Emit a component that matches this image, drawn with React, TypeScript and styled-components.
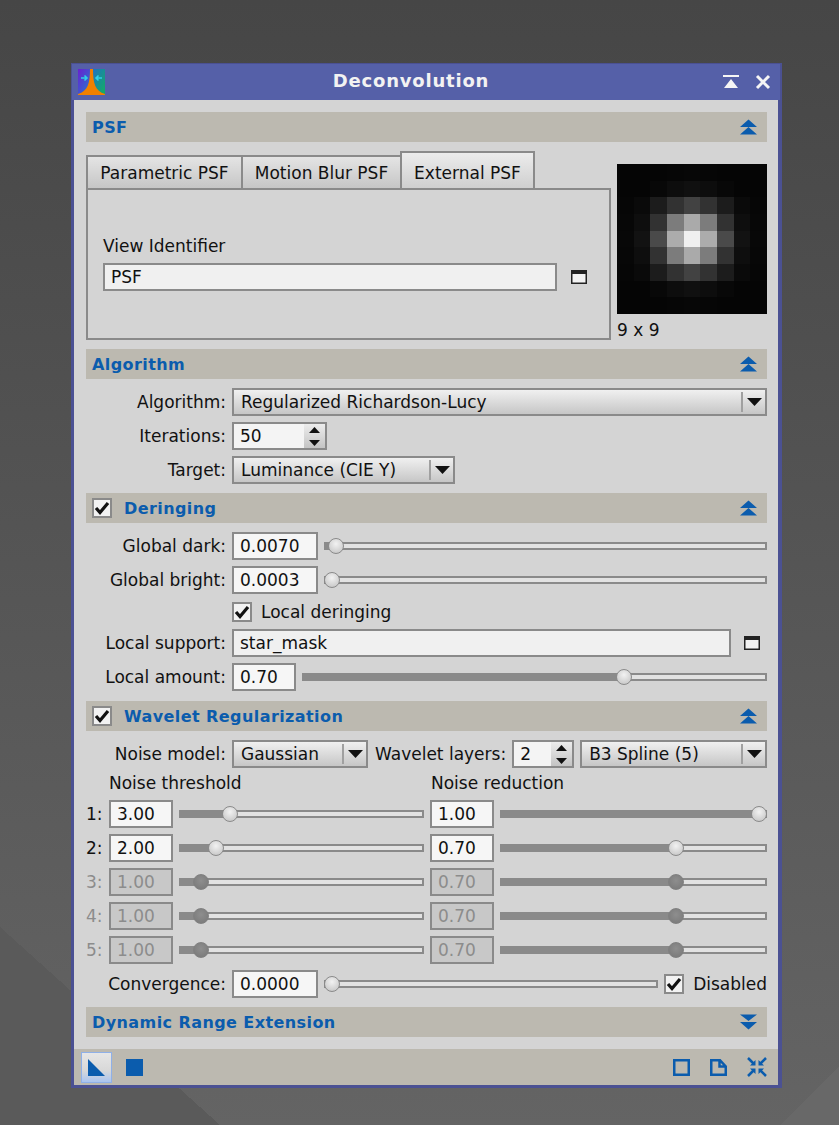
import React from "react";
import styled, { createGlobalStyle } from "styled-components";

const GlobalStyle = createGlobalStyle`
  html, body {
    margin: 0;
    padding: 0;
    height: 100%;
  }
  body {
    font-family: "DejaVu Sans", sans-serif;
    font-size: 17px;
    color: #111;
    background: #4a4a4a;
  }
`;

const BLUE = "#0b5cad";
const BORDER = "#8a8a8a";

const Desktop = styled.div`
  box-sizing: border-box;
  width: 839px;
  height: 1125px;
  padding: 63px 0 0 71px;
  overflow: hidden;
  background:
    linear-gradient(to top right, #5a5a5a 50%, transparent 50%) left bottom / 220px 198px no-repeat,
    linear-gradient(to bottom right, transparent 50%, #686868 50%) right bottom / 58px 58px no-repeat,
    linear-gradient(to bottom, #464646 0, #646464 100%);
`;

const Window = styled.div`
  width: 710px;
  height: 1025px;
  box-sizing: border-box;
  border: 3px solid #4b5193;
  border-top-width: 1px;
  box-shadow: 1px 0 0 #4b5193;
  background: #d4d4d4;
  display: flex;
  flex-direction: column;
`;

const TitleBar = styled.div`
  height: 36px;
  margin: 0 -2px;
  flex: none;
  background: #5560a8;
  display: flex;
  align-items: center;
  padding: 0 9px 0 6px;
  color: #f2f2f2;
  font-weight: 700;
`;

const Title = styled.div`
  flex: 1;
  text-align: center;
  font-size: 18px;
  letter-spacing: 0.8px;
  padding-right: 6px;
  margin-top: -3px;
`;

const TitleButtons = styled.div`
  display: flex;
  align-items: center;
  gap: 16px;
`;

const Body = styled.div`
  flex: 1;
  display: flex;
  flex-direction: column;
  padding: 12px 11px 0 12px;
`;

const SectionBar = styled.div`
  height: 30px;
  flex: none;
  background: #bcb9b0;
  display: flex;
  align-items: center;
  gap: 12px;
  padding: 0 10px 0 6px;
  color: ${BLUE};
  font-weight: 700;
`;

const SectionTitle = styled.span`
  flex: 1;
  font-size: 16px;
  letter-spacing: 0.42px;
`;

const PsfArea = styled.div`
  display: flex;
  gap: 6px;
  padding-top: 9px;
  height: 207px;
  box-sizing: border-box;
`;

const TabColumn = styled.div`
  width: 525px;
  display: flex;
  flex-direction: column;
`;

const TabStrip = styled.div`
  display: flex;
  align-items: flex-end;
  height: 39px;
  margin-bottom: -2px;
`;

const Tab = styled.div<{ $active?: boolean; $width: number }>`
  box-sizing: border-box;
  width: ${(p) => p.$width}px;
  height: ${(p) => (p.$active ? 39 : 35)}px;
  padding-top: ${(p) => (p.$active ? 4 : 0)}px;
  border: 2px solid ${BORDER};
  margin-right: -2px;
  display: flex;
  align-items: center;
  justify-content: center;
  background: ${(p) =>
    p.$active
      ? "linear-gradient(to bottom, #ececec, #cfcfcf)"
      : "linear-gradient(to bottom, #e4e4e4, #c6c6c6)"};
  position: relative;
  z-index: ${(p) => (p.$active ? 2 : 1)};
  white-space: nowrap;
`;

const TabPanel = styled.div`
  box-sizing: border-box;
  height: 152px;
  border: 2px solid ${BORDER};
  padding: 46px 22px 0 15px;
`;

const PanelLabel = styled.div`
  line-height: 20px;
  margin-bottom: 7px;
`;

const PanelRow = styled.div`
  display: flex;
  align-items: center;
  gap: 14px;
`;

const PreviewColumn = styled.div`
  padding-top: 13px;
  width: 150px;
`;

const Preview = styled.div`
  width: 150px;
  height: 150px;
  background: #050505;
  display: grid;
  grid-template-columns: repeat(9, 1fr);
  grid-template-rows: repeat(9, 1fr);
`;

const PreviewCell = styled.div<{ $v: number }>`
  background: rgb(${(p) => p.$v}, ${(p) => p.$v}, ${(p) => p.$v});
`;

const PreviewCaption = styled.div`
  margin-top: 6px;
  line-height: 20px;
`;

const Rows = styled.div<{ $pad?: string }>`
  display: flex;
  flex-direction: column;
  gap: 6px;
  padding: ${(p) => p.$pad ?? "9px 0"};
`;

const Row = styled.div<{ $height?: number }>`
  display: flex;
  align-items: center;
  gap: 6px;
  height: ${(p) => p.$height ?? 28}px;
`;

const Label = styled.div<{ $width?: number; $muted?: boolean; $offset?: number }>`
  width: ${(p) => (p.$width ? `${p.$width}px` : "auto")};
  margin-left: ${(p) => p.$offset ?? 0}px;
  flex: none;
  text-align: right;
  white-space: nowrap;
  color: ${(p) => (p.$muted ? "#8c8c8c" : "#111")};
`;

const Field = styled.div<{ $width?: number; $disabled?: boolean; $tone?: string }>`
  box-sizing: border-box;
  height: 28px;
  width: ${(p) => (p.$width ? `${p.$width}px` : "auto")};
  flex: ${(p) => (p.$width ? "none" : "1")};
  border: 2px solid ${BORDER};
  padding-left: 6px;
  display: flex;
  align-items: center;
  background: ${(p) => (p.$disabled ? "#c8c8c8" : p.$tone ?? "#f6f6f6")};
  color: ${(p) => (p.$disabled ? "#8c8c8c" : "#111")};
`;

const Combo = styled.div<{ $width?: number }>`
  box-sizing: border-box;
  height: 28px;
  width: ${(p) => (p.$width ? `${p.$width}px` : "auto")};
  flex: ${(p) => (p.$width ? "none" : "1")};
  border: 2px solid ${BORDER};
  background: linear-gradient(to bottom, #f0f0f0, #c6c6c6);
  display: flex;
  align-items: center;
  padding-left: 7px;
`;

const ComboText = styled.span`
  flex: 1;
  white-space: nowrap;
`;

const ComboArrow = styled.div`
  width: 24px;
  height: 20px;
  border-left: 2px solid #a0a0a0;
  box-sizing: border-box;
  display: flex;
  align-items: center;
  justify-content: center;
`;

const Spin = styled.div<{ $width: number }>`
  box-sizing: border-box;
  width: ${(p) => p.$width}px;
  height: 28px;
  border: 2px solid ${BORDER};
  display: flex;
`;

const SpinValue = styled.div`
  flex: 1;
  background: #f4f4f4;
  padding-left: 6px;
  display: flex;
  align-items: center;
`;

const SpinButtons = styled.div`
  width: 21px;
  background: linear-gradient(to bottom, #ececec, #c4c4c4);
  display: flex;
  flex-direction: column;
  align-items: center;
  justify-content: center;
  gap: 7px;
`;

const Track = styled.div`
  flex: 1;
  min-width: 0;
  height: 8px;
  box-sizing: border-box;
  border: 2px solid ${BORDER};
  background: #e2e2e2;
  position: relative;
`;

const TrackFill = styled.div`
  position: absolute;
  left: 0;
  top: 0;
  bottom: 0;
  background: ${BORDER};
`;

const Thumb = styled.div<{ $disabled?: boolean }>`
  position: absolute;
  top: 50%;
  width: 16px;
  height: 16px;
  box-sizing: border-box;
  border-radius: 50%;
  transform: translate(-50%, -50%);
  border: 1px solid ${(p) => (p.$disabled ? "#808080" : BORDER)};
  background: ${(p) =>
    p.$disabled
      ? "radial-gradient(circle at 50% 40%, #8e8e8e, #777)"
      : "radial-gradient(circle at 50% 35%, #f2f2f2, #c0c0c0)"};
`;

const Box = styled.div`
  box-sizing: border-box;
  width: 20px;
  height: 20px;
  flex: none;
  border: 2px solid ${BORDER};
  background: #f2f2f2;
  display: flex;
  align-items: center;
  justify-content: center;
`;

const Columns = styled.div`
  display: grid;
  grid-template-columns: 338px 337px;
  column-gap: 6px;
  height: 28px;
  align-items: center;
`;

const HeadRow = styled.div`
  display: grid;
  grid-template-columns: 316px 337px;
  column-gap: 6px;
  height: 20px;
  line-height: 20px;
  padding-left: 23px;
  position: relative;
  top: -1px;
`;

const ColumnCell = styled.div`
  display: flex;
  align-items: center;
  gap: 6px;
  min-width: 0;
`;

const RowNumber = styled.div<{ $muted?: boolean }>`
  width: 17px;
  color: ${(p) => (p.$muted ? "#8c8c8c" : "#111")};
`;

const ViewSlot = styled.div`
  display: flex;
  margin: 0 7px;
`;

const Footer = styled.div`
  height: 36px;
  flex: none;
  background: #bcb9b0;
  display: flex;
  align-items: center;
  padding: 0 11px 0 7px;
  margin-top: 12px;
`;

const FooterActive = styled.div`
  box-sizing: border-box;
  width: 31px;
  height: 31px;
  border: 1px solid #8fb0e8;
  background: linear-gradient(to bottom, #e6e6e6, #d8d8d8 60%, #a9c4f0);
  display: flex;
  align-items: center;
  justify-content: center;
`;

const FooterLeft = styled.div`
  flex: 1;
  display: flex;
  align-items: center;
  gap: 14px;
`;

const FooterRight = styled.div`
  display: flex;
  align-items: center;
  gap: 20px;
`;

const Check = () => (
  <svg width="16" height="14" viewBox="0 0 16 14">
    <path d="M2 7 L6 11.5 L14 2" fill="none" stroke="#111" strokeWidth="3.2" />
  </svg>
);

const Arrow = ({ up, w = 15, h = 8 }: { up?: boolean; w?: number; h?: number }) => (
  <svg width={w} height={h} viewBox="0 0 14 7" preserveAspectRatio="none">
    <path d={up ? "M0 7 L7 0 L14 7 Z" : "M0 0 L14 0 L7 7 Z"} fill="#111" />
  </svg>
);

const Fold = ({ down }: { down?: boolean }) => (
  <svg width="17" height="16" viewBox="0 0 18 16">
    {down ? (
      <path d="M0 0 H18 L9 7 Z M0 8 H18 L9 16 Z" fill={BLUE} />
    ) : (
      <path d="M9 0 L18 8 H0 Z M9 8 L18 16 H0 Z" fill={BLUE} />
    )}
  </svg>
);

const ViewButton = () => (
  <svg width="16" height="14" viewBox="0 0 16 14">
    <rect x="0.75" y="0.75" width="14.5" height="12.5" fill="#f2f2f2" stroke="#222" strokeWidth="1.5" />
    <rect x="0" y="0" width="16" height="4" fill="#222" />
  </svg>
);

const ProcessIcon = () => (
  <svg width="27" height="27" viewBox="0 0 27 27">
    <defs>
      <linearGradient id="logoLeft" x1="0" y1="0" x2="1" y2="1">
        <stop offset="0" stopColor="#6a1fd0" />
        <stop offset="1" stopColor="#1f7fd0" />
      </linearGradient>
      <linearGradient id="logoRight" x1="0" y1="0" x2="1" y2="1">
        <stop offset="0" stopColor="#1f6fc8" />
        <stop offset="1" stopColor="#12b060" />
      </linearGradient>
    </defs>
    <rect x="0" y="0" width="13" height="25" fill="url(#logoLeft)" />
    <rect x="14" y="0" width="13" height="25" fill="url(#logoRight)" />
    <path d="M12 0 H15 C15 14 17 22 27 25 V26 H0 V25 C10 22 12 14 12 0 Z" fill="#f08000" />
    <path d="M3 9 H9 M6.5 6.5 L9 9 L6.5 11.5" fill="none" stroke="#30d0e8" strokeWidth="1.6" />
    <path d="M24 9 H18 M20.5 6.5 L18 9 L20.5 11.5" fill="none" stroke="#30d0e8" strokeWidth="1.6" />
  </svg>
);

const psfValues = [
  [5, 5, 5, 6, 7, 6, 5, 5, 5],
  [5, 5, 8, 13, 16, 13, 8, 5, 5],
  [6, 10, 28, 50, 66, 50, 28, 10, 6],
  [7, 14, 50, 124, 170, 124, 50, 14, 7],
  [8, 18, 74, 172, 240, 172, 74, 18, 8],
  [7, 14, 50, 124, 170, 124, 50, 14, 7],
  [6, 10, 28, 50, 66, 50, 28, 10, 6],
  [5, 5, 8, 13, 16, 13, 8, 5, 5],
  [5, 5, 5, 6, 7, 6, 5, 5, 5],
];

// the thumb stays inside the track, so its centre runs from 8px to width-8px
function Slider({ pos, disabled }: { pos: number; disabled?: boolean }) {
  const at = `calc(6px + (100% - 12px) * ${pos})`;
  return (
    <Track>
      <TrackFill style={{ width: at }} />
      <Thumb $disabled={disabled} style={{ left: at }} />
    </Track>
  );
}

function NoiseRow({
  n,
  threshold,
  thresholdPos,
  reduction,
  reductionPos,
  disabled,
}: {
  n: number;
  threshold: string;
  thresholdPos: number;
  reduction: string;
  reductionPos: number;
  disabled?: boolean;
}) {
  return (
    <Columns>
      <ColumnCell>
        <RowNumber $muted={disabled}>{n}:</RowNumber>
        <Field $width={64} $disabled={disabled}>{threshold}</Field>
        <Slider pos={thresholdPos} disabled={disabled} />
      </ColumnCell>
      <ColumnCell>
        <Field $width={64} $disabled={disabled}>{reduction}</Field>
        <Slider pos={reductionPos} disabled={disabled} />
      </ColumnCell>
    </Columns>
  );
}

export default function App() {
  return (
    <Desktop>
      <GlobalStyle />
      <Window>
        <TitleBar>
          <ProcessIcon />
          <Title>Deconvolution</Title>
          <TitleButtons>
            <svg width="16" height="14" viewBox="0 0 16 14">
              <path d="M0 0 H16 V2 H0 Z M8 4 L15 13 H1 Z" fill="#f5f5f5" />
            </svg>
            <svg width="16" height="16" viewBox="0 0 16 16">
              <path d="M2 2 L14 14 M14 2 L2 14" stroke="#f5f5f5" strokeWidth="3" />
            </svg>
          </TitleButtons>
        </TitleBar>
        <Body>
          <SectionBar>
            <SectionTitle>PSF</SectionTitle>
            <Fold />
          </SectionBar>
          <PsfArea>
            <TabColumn>
              <TabStrip>
                <Tab $width={157}>Parametric PSF</Tab>
                <Tab $width={161}>Motion Blur PSF</Tab>
                <Tab $width={135} $active>External PSF</Tab>
              </TabStrip>
              <TabPanel>
                <PanelLabel>View Identifier</PanelLabel>
                <PanelRow>
                  <Field $tone="#f0f0f0">PSF</Field>
                  <ViewButton />
                </PanelRow>
              </TabPanel>
            </TabColumn>
            <PreviewColumn>
              <Preview>
                {psfValues.flat().map((v, i) => (
                  <PreviewCell key={i} $v={v} />
                ))}
              </Preview>
              <PreviewCaption>9 x 9</PreviewCaption>
            </PreviewColumn>
          </PsfArea>

          <SectionBar>
            <SectionTitle>Algorithm</SectionTitle>
            <Fold />
          </SectionBar>
          <Rows>
            <Row>
              <Label $width={140}>Algorithm:</Label>
              <Combo>
                <ComboText>Regularized Richardson-Lucy</ComboText>
                <ComboArrow><Arrow /></ComboArrow>
              </Combo>
            </Row>
            <Row>
              <Label $width={140}>Iterations:</Label>
              <Spin $width={95}>
                <SpinValue>50</SpinValue>
                <SpinButtons>
                  <Arrow up w={11} h={6} />
                  <Arrow w={11} h={6} />
                </SpinButtons>
              </Spin>
            </Row>
            <Row>
              <Label $width={140}>Target:</Label>
              <Combo $width={223}>
                <ComboText>Luminance (CIE Y)</ComboText>
                <ComboArrow><Arrow /></ComboArrow>
              </Combo>
            </Row>
          </Rows>

          <SectionBar>
            <Box><Check /></Box>
            <SectionTitle>Deringing</SectionTitle>
            <Fold />
          </SectionBar>
          <Rows $pad="9px 0 10px">
            <Row>
              <Label $width={140}>Global dark:</Label>
              <Field $width={86}>0.0070</Field>
              <Slider pos={0.009} />
            </Row>
            <Row>
              <Label $width={140}>Global bright:</Label>
              <Field $width={86}>0.0003</Field>
              <Slider pos={0} />
            </Row>
            <Row $height={23}>
              <Label $width={140} />
              <Box><Check /></Box>
              <Label $offset={3}>Local deringing</Label>
            </Row>
            <Row>
              <Label $width={140}>Local support:</Label>
              <Field $tone="#f0f0f0">star_mask</Field>
              <ViewSlot><ViewButton /></ViewSlot>
            </Row>
            <Row>
              <Label $width={140}>Local amount:</Label>
              <Field $width={64}>0.70</Field>
              <Slider pos={0.7} />
            </Row>
          </Rows>

          <SectionBar>
            <Box><Check /></Box>
            <SectionTitle>Wavelet Regularization</SectionTitle>
            <Fold />
          </SectionBar>
          <Rows>
            <Row>
              <Label $width={140}>Noise model:</Label>
              <Combo $width={136}>
                <ComboText>Gaussian</ComboText>
                <ComboArrow><Arrow /></ComboArrow>
              </Combo>
              <Label $offset={1}>Wavelet layers:</Label>
              <Spin $width={62}>
                <SpinValue>2</SpinValue>
                <SpinButtons>
                  <Arrow up w={11} h={6} />
                  <Arrow w={11} h={6} />
                </SpinButtons>
              </Spin>
              <Combo>
                <ComboText>B3 Spline (5)</ComboText>
                <ComboArrow><Arrow /></ComboArrow>
              </Combo>
            </Row>
            <HeadRow>
              <span>Noise threshold</span>
              <span>Noise reduction</span>
            </HeadRow>
            <NoiseRow n={1} threshold="3.00" thresholdPos={0.188} reduction="1.00" reductionPos={1} />
            <NoiseRow n={2} threshold="2.00" thresholdPos={0.127} reduction="0.70" reductionPos={0.669} />
            <NoiseRow n={3} threshold="1.00" thresholdPos={0.061} reduction="0.70" reductionPos={0.669} disabled />
            <NoiseRow n={4} threshold="1.00" thresholdPos={0.061} reduction="0.70" reductionPos={0.669} disabled />
            <NoiseRow n={5} threshold="1.00" thresholdPos={0.061} reduction="0.70" reductionPos={0.669} disabled />
            <Row>
              <Label $width={140}>Convergence:</Label>
              <Field $width={86}>0.0000</Field>
              <Slider pos={0} />
              <Box><Check /></Box>
              <Label $offset={3}>Disabled</Label>
            </Row>
          </Rows>

          <SectionBar>
            <SectionTitle>Dynamic Range Extension</SectionTitle>
            <Fold down />
          </SectionBar>
        </Body>
        <Footer>
          <FooterLeft>
            <FooterActive>
              <svg width="17" height="17" viewBox="0 0 17 17">
                <path d="M0 0 L17 17 H0 Z" fill={BLUE} />
              </svg>
            </FooterActive>
            <svg width="17" height="17" viewBox="0 0 17 17">
              <rect width="17" height="17" fill={BLUE} />
            </svg>
          </FooterLeft>
          <FooterRight>
            <svg width="17" height="17" viewBox="0 0 17 17">
              <rect x="1.25" y="1.25" width="14.5" height="14.5" fill="none" stroke={BLUE} strokeWidth="2.5" />
            </svg>
            <svg width="17" height="17" viewBox="0 0 17 17">
              <path d="M1.25 1.25 H10 L15.75 7.5 V15.75 H1.25 Z M9.5 1.25 V7.5 H15.75" fill="none" stroke={BLUE} strokeWidth="2.5" />
            </svg>
            <svg width="20" height="20" viewBox="0 0 20 20">
              <path d="M1 1 L7 7 M19 1 L13 7 M1 19 L7 13 M19 19 L13 13" stroke={BLUE} strokeWidth="2.5" />
              <path d="M8.5 8.5 H3 L8.5 3 Z M11.5 8.5 H17 L11.5 3 Z M8.5 11.5 H3 L8.5 17 Z M11.5 11.5 H17 L11.5 17 Z" fill={BLUE} />
            </svg>
          </FooterRight>
        </Footer>
      </Window>
    </Desktop>
  );
}
